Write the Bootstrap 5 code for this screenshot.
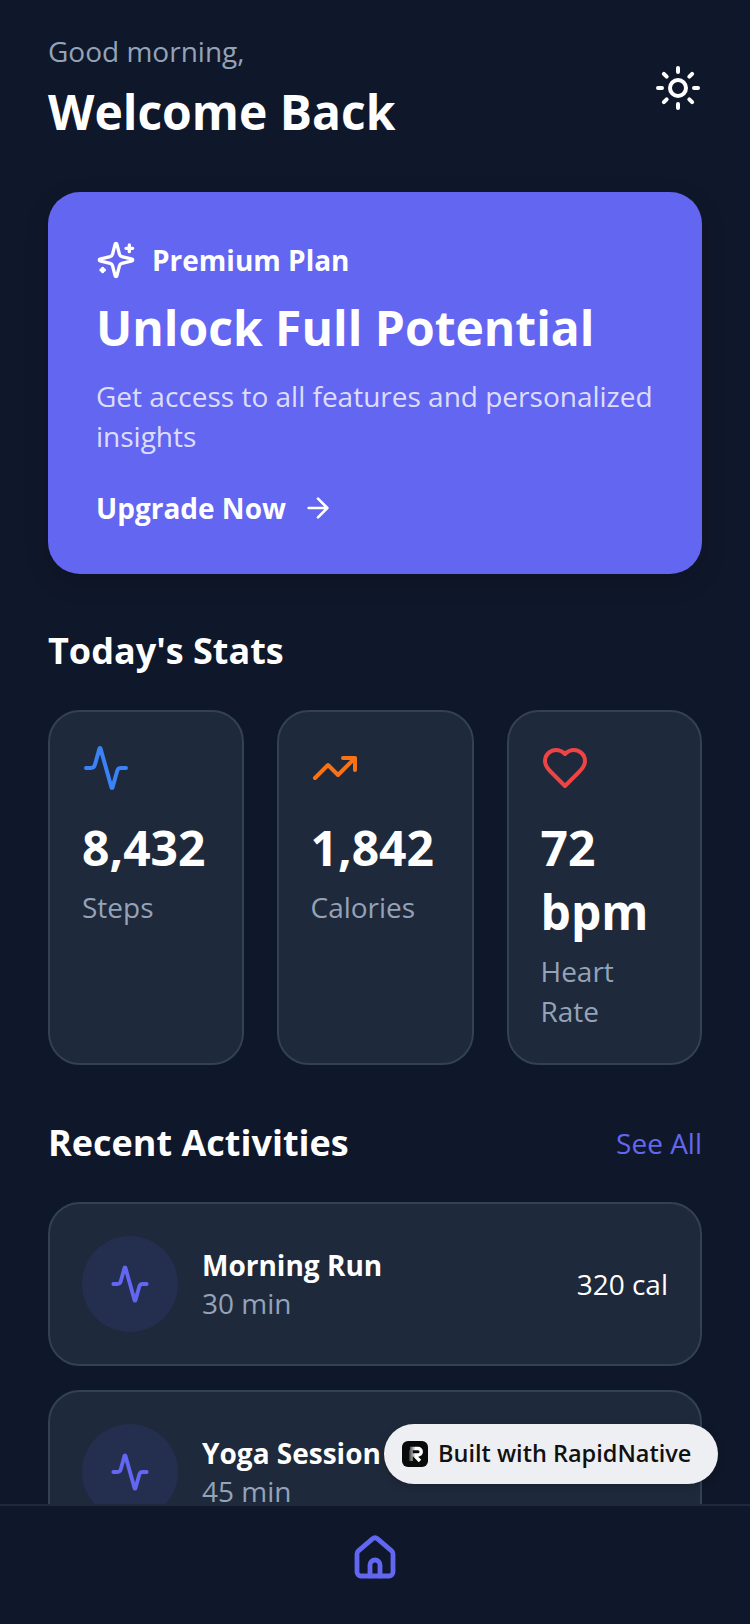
<!DOCTYPE html>
<html lang="en">
<head>
  <meta charset="UTF-8">
  <meta name="viewport" content="width=device-width, initial-scale=1.0">
  <title>Welcome Back</title>
  <link href="https://cdn.jsdelivr.net/npm/bootstrap@5.3.0/dist/css/bootstrap.min.css" rel="stylesheet">
  <style>
    html, body { height: 100%; }
    body { font-family: "Open Sans", "Liberation Sans", sans-serif; background-color: #0f172a; color: #fff; overflow: hidden; }
    .app-screen { height: 1624px; position: relative; }
    .app-scroll { padding: 31px 48px 0; min-height: 0; overflow: hidden; }
    .greet-text { font-size: 28px; line-height: 40px; color: #94a3b8; }
    .welcome-text { font-size: 48px; line-height: 64px; font-weight: 700; margin-top: 9px; }
    .promo-box { background-color: #6366f1; border-radius: 32px; padding: 48px; margin-top: 48px; height: 382px; box-shadow: 0 8px 24px rgba(0, 0, 0, .15); }
    .promo-label { font-size: 28px; line-height: 40px; font-weight: 700; }
    .promo-title { font-size: 48px; line-height: 64px; font-weight: 700; margin-top: 16px; }
    .promo-desc { font-size: 28px; line-height: 40px; color: rgba(255, 255, 255, .8); margin-top: 16px; }
    .promo-link { font-size: 28px; line-height: 40px; font-weight: 700; margin-top: 32px; }
    .section-title { font-size: 36px; line-height: 48px; font-weight: 700; margin: 0; }
    .stat-row { gap: 33px; margin-top: 35px; }
    .stat-box { flex: 1 1 195.5px; min-width: 0; height: 355px; background-color: #1e293b; border: 2px solid #334155; border-radius: 32px; padding: 32px; }
    .stat-box-mid { flex-basis: 197px; }
    .stat-num { font-size: 48px; line-height: 64px; font-weight: 700; margin-top: 24px; }
    .stat-label { font-size: 28px; line-height: 40px; color: #94a3b8; margin-top: 7px; }
    .see-all { font-size: 28px; line-height: 40px; color: #6366f1; }
    .activity-box { background-color: #1e293b; border: 2px solid #334155; border-radius: 32px; padding: 32px; height: 164px; margin-top: 24px; flex-shrink: 0; }
    .activity-dot { width: 96px; height: 96px; border-radius: 50%; background-color: rgba(99, 102, 241, .1); flex-shrink: 0; margin-right: 24px; }
    .activity-name { font-size: 28px; line-height: 38px; font-weight: 700; }
    .activity-time { font-size: 28px; line-height: 38px; color: #94a3b8; }
    .activity-cal { font-size: 28px; line-height: 38px; }
    .tab-bar { height: 120px; flex-shrink: 0; background-color: #0f172a; border-top: 2px solid #1e293b; padding-top: 28px; }
    .built-badge { position: absolute; left: 384px; top: 1424px; width: 334px; height: 60px; border-radius: 30px; background-color: #eeeff2; color: #111; font-size: 23.5px; font-weight: 600; gap: 10px; padding-left: 18px; box-shadow: 0 2px 8px rgba(0, 0, 0, .2); }
    .built-logo { width: 26px; height: 26px; border-radius: 6px; background-color: #0a0a0a; }
  </style>
</head>
<body>
  <div class="app-screen d-flex flex-column">
    <div class="app-scroll flex-grow-1">
      <div class="d-flex justify-content-between align-items-center">
        <div>
          <div class="greet-text">Good morning,</div>
          <div class="welcome-text">Welcome Back</div>
        </div>
        <svg width="48" height="48" viewBox="0 0 24 24" fill="none" stroke="#fff" stroke-width="2" stroke-linecap="round" stroke-linejoin="round">
          <circle cx="12" cy="12" r="4"/>
          <path d="M12 2v2M12 20v2M4.93 4.93l1.41 1.41M17.66 17.66l1.41 1.41M2 12h2M20 12h2M6.34 17.66l-1.41 1.41M19.07 4.93l-1.41 1.41"/>
        </svg>
      </div>

      <div class="promo-box">
        <div class="d-flex align-items-center gap-3">
          <svg width="40" height="40" viewBox="0 0 24 24" fill="none" stroke="#fff" stroke-width="2" stroke-linecap="round" stroke-linejoin="round">
            <path d="M9.94 15.5A2 2 0 0 0 8.5 14.06l-6.14-1.58a.5.5 0 0 1 0-.96L8.5 9.94A2 2 0 0 0 9.94 8.5l1.58-6.14a.5.5 0 0 1 .96 0L14.06 8.5A2 2 0 0 0 15.5 9.94l6.14 1.58a.5.5 0 0 1 0 .96L15.5 14.06a2 2 0 0 0-1.44 1.44l-1.58 6.14a.5.5 0 0 1-.96 0z"/>
            <path d="M20 3v4M22 5h-4M4 17v2M5 18H3"/>
          </svg>
          <span class="promo-label">Premium Plan</span>
        </div>
        <div class="promo-title">Unlock Full Potential</div>
        <div class="promo-desc">Get access to all features and personalized insights</div>
        <div class="promo-link d-flex align-items-center gap-3">
          <span>Upgrade Now</span>
          <svg width="32" height="32" viewBox="0 0 24 24" fill="none" stroke="#fff" stroke-width="2" stroke-linecap="round" stroke-linejoin="round"><path d="M5 12h14M12 5l7 7-7 7"/></svg>
        </div>
      </div>

      <h2 class="section-title" style="margin-top:53px">Today's Stats</h2>
      <div class="d-flex stat-row">
        <div class="stat-box">
          <svg class="d-block" width="48" height="48" viewBox="0 0 24 24" fill="none" stroke="#3b82f6" stroke-width="2" stroke-linecap="round" stroke-linejoin="round"><path d="M22 12h-2.48a2 2 0 0 0-1.93 1.46l-2.35 8.36a.25.25 0 0 1-.48 0L9.24 2.18a.25.25 0 0 0-.48 0l-2.35 8.36A2 2 0 0 1 4.49 12H2"/></svg>
          <div class="stat-num">8,432</div>
          <div class="stat-label">Steps</div>
        </div>
        <div class="stat-box stat-box-mid">
          <svg class="d-block" width="48" height="48" viewBox="0 0 24 24" fill="none" stroke="#f97316" stroke-width="2" stroke-linecap="round" stroke-linejoin="round"><path d="M22 7l-8.5 8.5-5-5L2 17M16 7h6v6"/></svg>
          <div class="stat-num">1,842</div>
          <div class="stat-label">Calories</div>
        </div>
        <div class="stat-box">
          <svg class="d-block" width="48" height="48" viewBox="0 0 24 24" fill="none" stroke="#ef4444" stroke-width="2" stroke-linecap="round" stroke-linejoin="round"><path d="M19 14c1.49-1.46 3-3.21 3-5.5A5.5 5.5 0 0 0 16.5 3c-1.76 0-3 .5-4.5 2-1.5-1.5-2.74-2-4.5-2A5.5 5.5 0 0 0 2 8.5c0 2.3 1.5 4.05 3 5.5l7 7Z"/></svg>
          <div class="stat-num">72 bpm</div>
          <div class="stat-label">Heart Rate</div>
        </div>
      </div>

      <div class="d-flex justify-content-between align-items-center" style="margin-top:54px">
        <h2 class="section-title">Recent Activities</h2>
        <span class="see-all">See All</span>
      </div>

      <div class="activity-box d-flex align-items-center" style="margin-top:35px">
        <div class="activity-dot d-flex align-items-center justify-content-center">
          <svg width="40" height="40" viewBox="0 0 24 24" fill="none" stroke="#6366f1" stroke-width="2.3" stroke-linecap="round" stroke-linejoin="round"><path d="M22 12h-2.48a2 2 0 0 0-1.93 1.46l-2.35 8.36a.25.25 0 0 1-.48 0L9.24 2.18a.25.25 0 0 0-.48 0l-2.35 8.36A2 2 0 0 1 4.49 12H2"/></svg>
        </div>
        <div class="flex-grow-1">
          <div class="activity-name">Morning Run</div>
          <div class="activity-time">30 min</div>
        </div>
        <div class="activity-cal">320 cal</div>
      </div>

      <div class="activity-box d-flex align-items-center">
        <div class="activity-dot d-flex align-items-center justify-content-center">
          <svg width="40" height="40" viewBox="0 0 24 24" fill="none" stroke="#6366f1" stroke-width="2.3" stroke-linecap="round" stroke-linejoin="round"><path d="M22 12h-2.48a2 2 0 0 0-1.93 1.46l-2.35 8.36a.25.25 0 0 1-.48 0L9.24 2.18a.25.25 0 0 0-.48 0l-2.35 8.36A2 2 0 0 1 4.49 12H2"/></svg>
        </div>
        <div class="flex-grow-1">
          <div class="activity-name">Yoga Session</div>
          <div class="activity-time">45 min</div>
        </div>
      </div>
    </div>

    <div class="tab-bar d-flex justify-content-center align-items-start">
      <svg width="48" height="48" viewBox="0 0 24 24" fill="none" stroke="#6366f1" stroke-width="2.4" stroke-linecap="round" stroke-linejoin="round"><path d="M14.5 21v-5.5a2.5 2.5 0 0 0-5 0V21"/><path d="M3 10a2 2 0 0 1 .709-1.528l7-5.999a2 2 0 0 1 2.582 0l7 5.999A2 2 0 0 1 21 10v9a2 2 0 0 1-2 2H5a2 2 0 0 1-2-2z"/></svg>
    </div>

    <div class="built-badge d-flex align-items-center">
      <svg class="built-logo" viewBox="0 0 26 26" fill="none" stroke-width="3.4">
        <defs><linearGradient id="logoFade" x1="0" y1="0" x2="1" y2="0"><stop offset="0" stop-color="#555"/><stop offset=".5" stop-color="#fff"/></linearGradient></defs>
        <path stroke="url(#logoFade)" d="M8 7.5h8a3 3 0 0 1 0 6.5h-4l6 6M9 9v11"/>
      </svg>
      <span>Built with RapidNative</span>
    </div>
  </div>

  <script src="https://cdn.jsdelivr.net/npm/bootstrap@5.3.0/dist/js/bootstrap.bundle.min.js"></script>
</body>
</html>
